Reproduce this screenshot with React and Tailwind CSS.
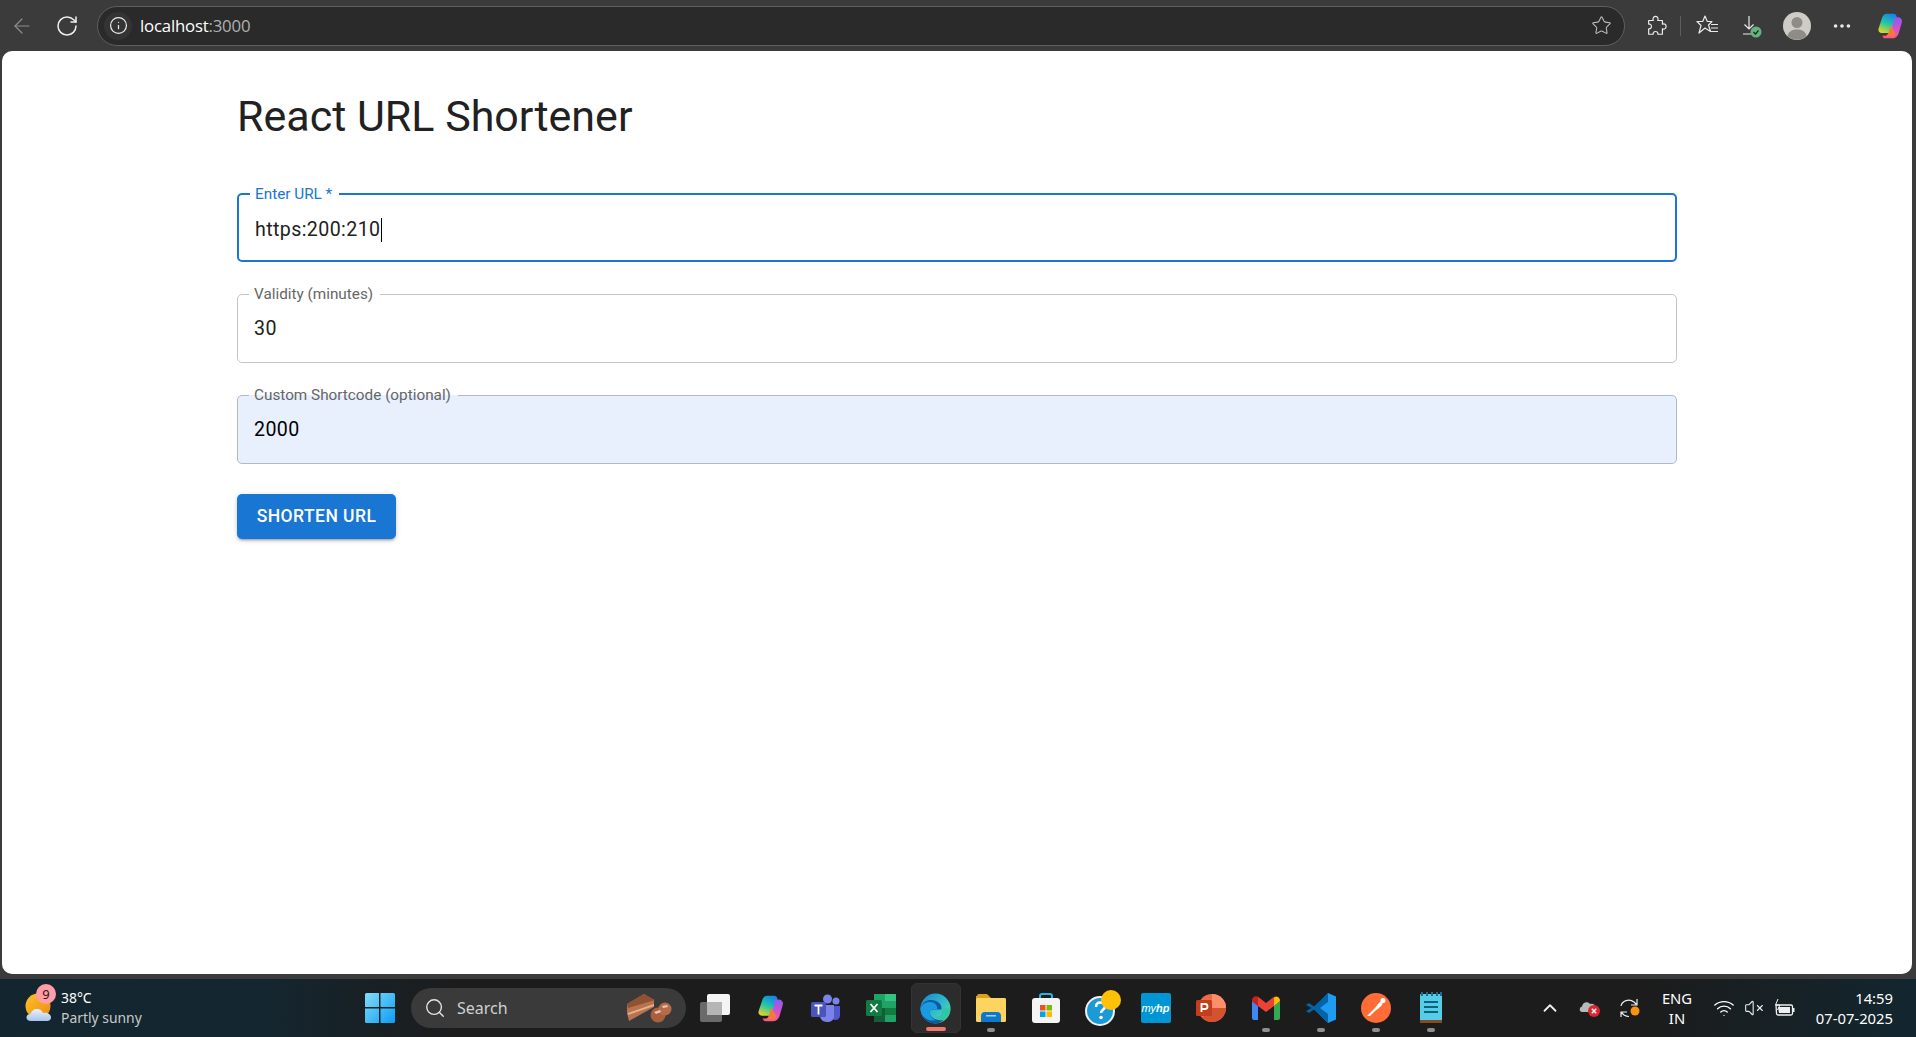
import { ArrowLeft, RotateCw, Info, Star, Search, ChevronUp, Wifi, VolumeX, MoreHorizontal } from "lucide-react";

const robotoClass = "font-['Roboto',sans-serif]";

function Copilot({ id, size = 28 }) {
  return (
    <svg width={size} height={size} viewBox="0 0 32 32">
      <defs>
        <linearGradient id={`${id}a`} x1="0.600" y1="0" x2="0.200" y2="1">
          <stop offset="0" stopColor="#1488e8" />
          <stop offset="0.5" stopColor="#25c9a0" />
          <stop offset="1" stopColor="#f5d020" />
        </linearGradient>
        <linearGradient id={`${id}b`} x1="0.500" y1="0" x2="0.500" y2="1">
          <stop offset="0" stopColor="#8a5cf0" />
          <stop offset="0.6" stopColor="#d84fd0" />
          <stop offset="1" stopColor="#f8607a" />
        </linearGradient>
      </defs>
      <path d="M12 2h8c2 0 3 1 3.600 3L20 20c-.6 2.500-2 4-4 4H7c-3 0-5-2.500-4-5.500l4-12C8 3.500 10 2 12 2z" fill={`url(#${id}a)`} />
      <path d="M21 6h4c3.500 0 5.500 3 4.500 6l-3.500 12c-1 3-3 6-7 6h-8c-2.500 0-3.500-1.500-3.500-3h6c2 0 3.500-1.500 4-3.500z" fill={`url(#${id}b)`} />
      <path d="M17 15l-3 9c-.5 1.500-1.500 3-3 3.500h8c2 0 3-1.500 3.500-3z" fill="#f5793a" />
    </svg>
  );
}

function Avatar() {
  return (
    <svg width="28" height="28" viewBox="0 0 28 28">
      <circle cx="14" cy="14" r="14" fill="#cfccc8" />
      <circle cx="14" cy="10.500" r="5.500" fill="#8f8b87" />
      <path d="M4.500 24c1-5 5-6.500 9.500-6.500s8.500 1.500 9.500 6.500a14 14 0 0 1-19 0z" fill="#8f8b87" />
    </svg>
  );
}

function PuzzlePiece() {
  return (
    <svg width="22" height="24" viewBox="0 0 24 24" fill="none" stroke="#ececec" strokeWidth="1.300" strokeLinejoin="round">
      <path d="M4 6h5c-1-3 1-4.500 2.500-4.500S15 3 14 6h5v4c2.500-1 4 .5 4 2.500s-1.500 3.500-4 2.500v6h-5c.5-2-1-3-2.500-3s-3 1-2.500 3H4v-6c2 .5 3-1 3-2.500S6 9.500 4 10z" />
    </svg>
  );
}

function Favorites() {
  return (
    <svg width="24" height="24" viewBox="0 0 24 24" fill="none" stroke="#e8e8e8" strokeWidth="1.200" strokeLinejoin="round">
      <path d="M9 2l2.300 5.500H16l-3.500 3.500 2 6.500L9 14l-6 5 2-7.500L1 7.500h5.700z" />
      <path d="M15 10.500h7M15 14h7M15 17.500h7" />
    </svg>
  );
}

function Download() {
  return (
    <svg width="24" height="24" viewBox="0 0 24 24">
      <path d="M9 2v13M4.500 10.500L9 15l4.500-4.500M3 20h11" stroke="#ececec" strokeWidth="1.200" fill="none" />
      <circle cx="16" cy="18" r="5.500" fill="#67b27f" />
      <path d="M13.500 18l2 2 3-3.500" stroke="#1c2a20" strokeWidth="1.300" fill="none" />
    </svg>
  );
}

function Weather() {
  return (
    <svg width="28" height="32" viewBox="0 0 28 32">
      <defs>
        <linearGradient id="sun" x1="0" y1="0" x2="1" y2="1">
          <stop offset="0" stopColor="#f8c22f" />
          <stop offset="1" stopColor="#f08a0c" />
        </linearGradient>
        <linearGradient id="cloud" x1="0" y1="0" x2="0" y2="1">
          <stop offset="0" stopColor="#eaf2fb" />
          <stop offset="1" stopColor="#a9c4ea" />
        </linearGradient>
      </defs>
      <circle cx="13" cy="13" r="12.500" fill="url(#sun)" />
      <path d="M6 28c-3 0-4.500-1.500-4.500-3.500S3 21 5.500 21c.8-3 3-5 6.500-5 3 0 5 1.500 6 4 4-.8 8 1 8 4.500 0 2-1.500 3.500-4 3.500z" fill="url(#cloud)" />
    </svg>
  );
}

function WindowsLogo() {
  return (
    <svg width="30" height="30" viewBox="0 0 30 30">
      <defs>
        <linearGradient id="win" x1="0" y1="0" x2="1" y2="1">
          <stop offset="0" stopColor="#86dcf7" />
          <stop offset="1" stopColor="#0a9cf5" />
        </linearGradient>
      </defs>
      <path d="M1.500 0H14v14H0V1.500A1.500 1.500 0 0 1 1.500 0zM15.500 0h13A1.500 1.500 0 0 1 30 1.500V14H15.500zM0 15.500h14V30H1.500A1.500 1.500 0 0 1 0 28.500zM15.500 15.500H30v13a1.500 1.500 0 0 1-1.500 1.500h-13z" fill="url(#win)" />
    </svg>
  );
}

function Cake() {
  return (
    <svg width="46" height="30" viewBox="0 0 46 30">
      <path d="M1 11L18 1l10 6v7L28 14 3 28 1 20z" fill="#b9744f" />
      <path d="M1 11L18 1l11 6-27 8z" fill="#8f5233" />
      <path d="M2 20l26-9v2L2 22z" fill="#e5b08e" />
      <circle cx="32" cy="22" r="7.500" fill="#a95f3d" />
      <circle cx="39" cy="16" r="6.500" fill="#b76c48" />
      <path d="M28 19l6-2 1 2-5 2zM36 13l5-1 1 2-5 1z" fill="#ecc7ad" />
    </svg>
  );
}

function TaskView() {
  return (
    <svg width="30" height="28" viewBox="0 0 30 28">
      <rect x="0" y="8" width="22" height="20" rx="2" fill="#6a6a6a" />
      <rect x="7" y="0" width="23" height="21" rx="2" fill="#f4f4f4" />
      <rect x="7" y="8" width="15" height="13" fill="#b5b5b5" />
    </svg>
  );
}

function Teams() {
  return (
    <svg width="30" height="30" viewBox="0 0 30 30">
      <circle cx="25" cy="8" r="3.500" fill="#7b83eb" />
      <circle cx="16.500" cy="6" r="4.500" fill="#7b83eb" />
      <path d="M20 13h9v9c0 3-2 5-4.500 5S20 25 20 22z" fill="#5059c9" />
      <path d="M9 12h14v11c0 4-3 6-7 6s-7-3-7-6z" fill="#7b83eb" />
      <rect x="0" y="9" width="15" height="15" rx="1.500" fill="#4b53bc" />
      <path d="M3.500 12.500h8M7.500 12.500v9" stroke="#fff" strokeWidth="1.800" />
    </svg>
  );
}

function Excel() {
  return (
    <svg width="30" height="28" viewBox="0 0 30 28">
      <path d="M8 0h21a1 1 0 0 1 1 1v26a1 1 0 0 1-1 1H9a1 1 0 0 1-1-1z" fill="#21a366" />
      <path d="M19 0h10a1 1 0 0 1 1 1v6H19z" fill="#33c481" />
      <path d="M8 14h11v14H9a1 1 0 0 1-1-1z" fill="#185c37" />
      <rect x="19" y="14" width="11" height="7" fill="#107c41" />
      <rect x="0" y="6" width="16" height="16" rx="1.500" fill="#107c41" />
      <path d="M4.500 10l7 8M11.500 10l-7 8" stroke="#fff" strokeWidth="1.800" />
    </svg>
  );
}

function Edge() {
  return (
    <svg width="31" height="31" viewBox="0 0 32 32">
      <defs>
        <linearGradient id="edgeA" x1="0" y1="0" x2="1" y2="1">
          <stop offset="0" stopColor="#0f87d0" />
          <stop offset="0.6" stopColor="#36c2c9" />
          <stop offset="1" stopColor="#7fdc5c" />
        </linearGradient>
      </defs>
      <circle cx="16" cy="16" r="15.500" fill="url(#edgeA)" />
      <path d="M0.500 16C2 8 10 6 16 8c5 2 7 6 6 9h-9c-2 0-3 1-3 3 0 4 5 8 11 8 2 0 3-.5 4-1-3 3-6 4.500-9 4.500C8 31.500.5 25 .5 16z" fill="#0c59a4" />
      <path d="M0.500 16C2 10 9 8 14 10c3 1.500 4 4 4 7h-5c-2 0-3 1-3 3 0 3 2 6 6 8-8 2-15.500-4-15.500-12z" fill="#1a9be0" />
      <path d="M22 17c2-2 9-1 9.500 0-1 5-3 8-6 10-3 1-8 1-10-3 3 1 8 0 7-7z" fill="#2ec4a8" opacity="0.900" />
    </svg>
  );
}

function Explorer() {
  return (
    <svg width="30" height="28" viewBox="0 0 30 28">
      <path d="M1 2a2 2 0 0 1 2-2h8l4 4h13a2 2 0 0 1 2 2v6H0V2z" fill="#d9a21b" />
      <rect x="0" y="4" width="30" height="24" rx="1.500" fill="#fcd45f" />
      <path d="M5 28v-6a4 4 0 0 1 4-4h12a4 4 0 0 1 4 4v6z" fill="#0f78c9" />
      <rect x="10" y="21" width="10" height="1.500" fill="#9ed3f5" />
    </svg>
  );
}

function Store() {
  return (
    <svg width="30" height="30" viewBox="0 0 30 30">
      <path d="M9 7V3a2 2 0 0 1 2-2h8a2 2 0 0 1 2 2v4" stroke="#29b2e8" strokeWidth="2" fill="none" />
      <rect x="1" y="5" width="28" height="25" rx="3" fill="#f4f4f4" />
      <rect x="9" y="12" width="5.500" height="5.500" fill="#f25022" />
      <rect x="15.500" y="12" width="5.500" height="5.500" fill="#7fba00" />
      <rect x="9" y="18.500" width="5.500" height="5.500" fill="#00a4ef" />
      <rect x="15.500" y="18.500" width="5.500" height="5.500" fill="#ffb900" />
    </svg>
  );
}

function Help() {
  return (
    <svg width="36" height="36" viewBox="0 0 36 36" className="ml-[4px]">
      <circle cx="15" cy="21" r="14" fill="#1a9ad6" stroke="#f0f0f0" strokeWidth="2" />
      <path d="M11 17c0-3 2-4.500 4.500-4.500s4.500 1.500 4.500 4c0 3-4 3.500-4 6.500" stroke="#fff" strokeWidth="2.500" fill="none" />
      <circle cx="16" cy="27.500" r="1.800" fill="#fff" />
      <circle cx="26" cy="10" r="10" fill="#ffc107" />
    </svg>
  );
}

function MyHp() {
  return (
    <div className="w-[30px] h-[30px] rounded-[2px] bg-[#0096d6] flex items-center justify-center text-white italic text-[11px] font-['Liberation_Sans',sans-serif]">
      my<span className="font-bold">hp</span>
    </div>
  );
}

function PowerPoint() {
  return (
    <svg width="30" height="28" viewBox="0 0 30 28">
      <circle cx="16" cy="14" r="14" fill="#ed6c47" />
      <path d="M16 0a14 14 0 0 1 14 14H16z" fill="#ff8f6b" />
      <path d="M16 14h14a14 14 0 0 1-14 14 14 14 0 0 1-10-4.200z" fill="#d35230" />
      <rect x="0" y="6" width="16" height="16" rx="1.500" fill="#c43e1c" />
      <path d="M5.500 18V10h3.500a2.500 2.500 0 0 1 0 5H5.500" stroke="#fff" strokeWidth="1.800" fill="none" />
    </svg>
  );
}

function Gmail() {
  return (
    <svg width="28" height="24" viewBox="0 0 28 24">
      <path d="M0 5v17a2 2 0 0 0 2 2h4V10z" fill="#4285f4" />
      <path d="M22 10v14h4a2 2 0 0 0 2-2V5z" fill="#34a853" />
      <path d="M0 5c0-4 4-6 7-3.500L14 7l7-5.500C24-1 28 1 28 5l-6 5-8 6-8-6z" fill="#ea4335" />
      <path d="M22 2c2-2.500 6-1 6 3l-6 5z" fill="#fbbc04" />
      <path d="M0 5c0-4 4-6 6-3.500V10z" fill="#c5221f" />
    </svg>
  );
}

function VsCode() {
  return (
    <svg width="30" height="30" viewBox="0 0 30 30">
      <path d="M22 0l8 3.500v23L22 30 8 16z" fill="#1f9cf0" />
      <path d="M22 0L8 13.500 3 10 0 12l5.500 3L0 18l3 2 5-3.500L22 30V21l-8-6 8-6z" fill="#0065a9" />
    </svg>
  );
}

function Postman() {
  return (
    <svg width="30" height="30" viewBox="0 0 30 30">
      <circle cx="15" cy="15" r="15" fill="#ff6c37" />
      <path d="M6 23l8-8 3-4 3-3 2 1-1 3-3 3-4 3-5 5z" fill="#fff" />
      <circle cx="22" cy="7.500" r="2.500" fill="#fff" />
    </svg>
  );
}

function Notepad() {
  return (
    <svg width="24" height="32" viewBox="0 0 24 32">
      <rect x="1" y="2" width="22" height="29" rx="1" fill="#55cde8" />
      <rect x="1" y="28" width="22" height="3" fill="#8a4a20" />
      <path d="M3 0v4M8 0v4M13 0v4M18 0v4M22 0v4" stroke="#1f6f8f" strokeWidth="2" />
      <path d="M5 10h14M5 15h14M5 20h14" stroke="#11607e" strokeWidth="2" />
    </svg>
  );
}

function OneDriveError() {
  return (
    <svg width="22" height="20" viewBox="0 0 22 20">
      <path d="M3 14c-3 0-3-5 0-5.500C3.500 4 9 3 11 6c3-1 6 1 6 4v4z" fill="#b9b9b9" />
      <circle cx="15" cy="13" r="6" fill="#d9252f" />
      <path d="M12.800 10.800l4.400 4.400M17.200 10.800l-4.400 4.400" stroke="#fff" strokeWidth="1.400" />
    </svg>
  );
}

function SyncDot() {
  return (
    <svg width="22" height="22" viewBox="0 0 22 22" fill="none" stroke="#ededed" strokeWidth="1.200">
      <path d="M2 9c1-5 8-8 13-4l3 3M18 2v6h-6" />
      <path d="M2 20v-5h6M2 15l3 3c1.500 1 3 1.500 5 1.500" />
      <circle cx="16" cy="14" r="4.500" fill="#f7930e" stroke="none" />
    </svg>
  );
}

function Battery() {
  return (
    <svg width="22" height="20" viewBox="0 0 22 20" fill="none" stroke="#f0f0f0" strokeWidth="1.300">
      <path d="M3 7h15a1.500 1.500 0 0 1 1.500 1.500v7A1.500 1.500 0 0 1 18 17H5a1.500 1.500 0 0 1-1.500-1.500z" />
      <path d="M20.500 10v4" strokeWidth="2" />
      <path d="M5 9h12v6H6z" fill="#f0f0f0" stroke="none" />
      <path d="M5 1L2.500 7H7l-2.500 5" strokeWidth="1" />
    </svg>
  );
}

function TaskSlot({ children, dot, active, className = "w-[55px]" }) {
  return (
    <div className={`${className} relative h-[50px] flex items-center justify-center shrink-0 rounded-md ${active ? "bg-[#2c2c2c] border border-[#333]" : ""}`}>
      {children}
      {dot && (
        <span className={`absolute bottom-[1px] left-1/2 -translate-x-1/2 h-[4px] rounded-full ${active ? "w-[20px] bg-[#f0796b]" : "w-[8px] bg-[#8f8f8f]"}`} />
      )}
    </div>
  );
}

function Field({ label, value, focused, filled, caret }) {
  const borderClass = focused
    ? "border-[2.5px] border-[#1976d2] h-[75px]"
    : filled
    ? "border border-[#b1bacb] bg-[#e8f0fe] h-[76px]"
    : "border border-[#c4c4c4] h-[76px]";
  return (
    <fieldset className={`${borderClass} rounded-[5px] pl-[12px] flex flex-col`}>
      <legend className={`ml-[-1px] pl-[5px] pr-[7px] text-[15.300px] leading-[14px] ${focused ? "text-[#1976d2]" : "text-[#666666]"}`}>{label}</legend>
      <div className={`flex items-center pl-[4px] h-[56px] text-[19.600px] tracking-[0.4px] ${focused ? "mt-[1px]" : ""} ${filled ? "text-black" : "text-[#212121]"}`}>
        <span>{value}</span>
        {caret && <span className="w-px h-[24px] bg-black" />}
      </div>
    </fieldset>
  );
}

export default function App() {
  return (
    <div className="h-screen w-full flex flex-col bg-[#3b3b3b] overflow-hidden">
      <header className="h-[51px] shrink-0 flex items-center font-['Open_Sans',sans-serif]">
        <ArrowLeft size={24} strokeWidth={1.200} className="ml-[10px] text-[#8d8d8d]" />
        <RotateCw size={24} strokeWidth={1.500} className="ml-[21px] text-[#efefef]" />
        <div className="ml-[18px] w-[1528px] h-[40px] rounded-full border border-[#5f5f5f] bg-[#2a2a2a] flex items-center pl-[6px] pr-[12px]">
          <div className="w-[28px] h-[28px] rounded-full bg-[#343434] flex items-center justify-center">
            <Info size={19} strokeWidth={1.500} className="text-[#ededed]" />
          </div>
          <span className="ml-[8px] text-[16.800px] tracking-[-0.2px] text-white">
            localhost<span className="text-[#b0b0b0]">:3000</span>
          </span>
          <Star size={21} strokeWidth={1.200} className="ml-auto text-[#bdbdbd]" />
        </div>
        <div className="ml-[20px]"><PuzzlePiece /></div>
        <span className="ml-[13px] w-px h-[20px] bg-[#5d5d5d]" />
        <div className="ml-[15px]"><Favorites /></div>
        <div className="ml-[20px]"><Download /></div>
        <div className="ml-[19px]"><Avatar /></div>
        <MoreHorizontal size={22} strokeWidth={2} className="ml-[20px] text-[#e8e8e8]" />
        <div className="ml-[23px]"><Copilot id="top" /></div>
      </header>

      <main className={`h-[923px] shrink-0 mx-[2px] w-[1910px] rounded-[10px] bg-white pl-[235px] ${robotoClass}`}>
        <div className="w-[1440px]">
          <h1 className="mt-[44px] text-[43px] leading-[42px] text-[#212121]">React URL Shortener</h1>
          <div className="mt-[50px] flex flex-col gap-[25px]">
            <Field label="Enter URL *" value="https:200:210" focused caret />
            <Field label="Validity (minutes)" value="30" />
            <Field label="Custom Shortcode (optional)" value="2000" filled />
          </div>
          <button className="mt-[30px] w-[159px] h-[45px] rounded-[5px] bg-[#1976d2] text-white text-[17.500px] font-[480] tracking-[0.45px] shadow-[0_3px_2px_-2px_rgba(0,0,0,0.2),0_2px_3px_0_rgba(0,0,0,0.14),0_1px_6px_0_rgba(0,0,0,0.12)]">
            SHORTEN URL
          </button>
        </div>
      </main>

      <footer className="mt-[5px] h-[58px] shrink-0 flex items-center text-white font-['Noto_Sans',sans-serif] bg-[linear-gradient(90deg,#13262f_0%,#14262f_14%,#1c1c1c_24%,#1c1c1c_86%,#12262f_100%)]">
        <div className="w-[349px] shrink-0 pl-[25px] flex items-center">
          <div className="relative w-[28px] h-[32px] mt-[2px]">
            <Weather />
            <span className="absolute top-[-9px] left-[11px] w-[20px] h-[20px] rounded-full bg-[#ff9ea6] text-[#2a1414] text-[13px] leading-[20px] text-center">9</span>
          </div>
          <div className="ml-[8px] flex flex-col text-[13.900px] leading-[20px]">
            <span>38°C</span>
            <span className="text-[#c9c9c9]">Partly sunny</span>
          </div>
        </div>
        <TaskSlot className="w-[62px]"><WindowsLogo /></TaskSlot>
        <div className="w-[275px] h-[40px] shrink-0 rounded-full bg-[#3a3a3a] flex items-center pl-[13px] pr-[14px]">
          <Search size={22} strokeWidth={1.500} className="text-[#e5e5e5]" />
          <span className="ml-[11px] text-[16px] text-[#d0d0d0]">Search</span>
          <div className="ml-auto"><Cake /></div>
        </div>
        <TaskSlot className="w-[57px]"><TaskView /></TaskSlot>
        <TaskSlot><Copilot id="bar" size={29} /></TaskSlot>
        <TaskSlot><Teams /></TaskSlot>
        <TaskSlot><Excel /></TaskSlot>
        <TaskSlot active dot className="w-[50px] mx-[2.500px]"><Edge /></TaskSlot>
        <TaskSlot dot><Explorer /></TaskSlot>
        <TaskSlot><Store /></TaskSlot>
        <TaskSlot><Help /></TaskSlot>
        <TaskSlot><MyHp /></TaskSlot>
        <TaskSlot><PowerPoint /></TaskSlot>
        <TaskSlot dot><Gmail /></TaskSlot>
        <TaskSlot dot><VsCode /></TaskSlot>
        <TaskSlot dot><Postman /></TaskSlot>
        <TaskSlot dot><Notepad /></TaskSlot>
        <ChevronUp size={22} strokeWidth={2} className="ml-[81px] text-[#eeeeee]" />
        <div className="ml-[18px]"><OneDriveError /></div>
        <div className="ml-[18px]"><SyncDot /></div>
        <div className="ml-[21px] w-[30px] flex flex-col items-center text-[14.800px] leading-[20px]">
          <span>ENG</span>
          <span>IN</span>
        </div>
        <Wifi size={22} strokeWidth={1.500} className="ml-[21px] text-white" />
        <VolumeX size={20} strokeWidth={1.300} className="ml-[9px] text-[#eeeeee]" />
        <div className="ml-[9px]"><Battery /></div>
        <div className="ml-auto pr-[23px] flex flex-col items-end text-[14.800px] leading-[20px]">
          <span>14:59</span>
          <span>07-07-2025</span>
        </div>
      </footer>
    </div>
  );
}
